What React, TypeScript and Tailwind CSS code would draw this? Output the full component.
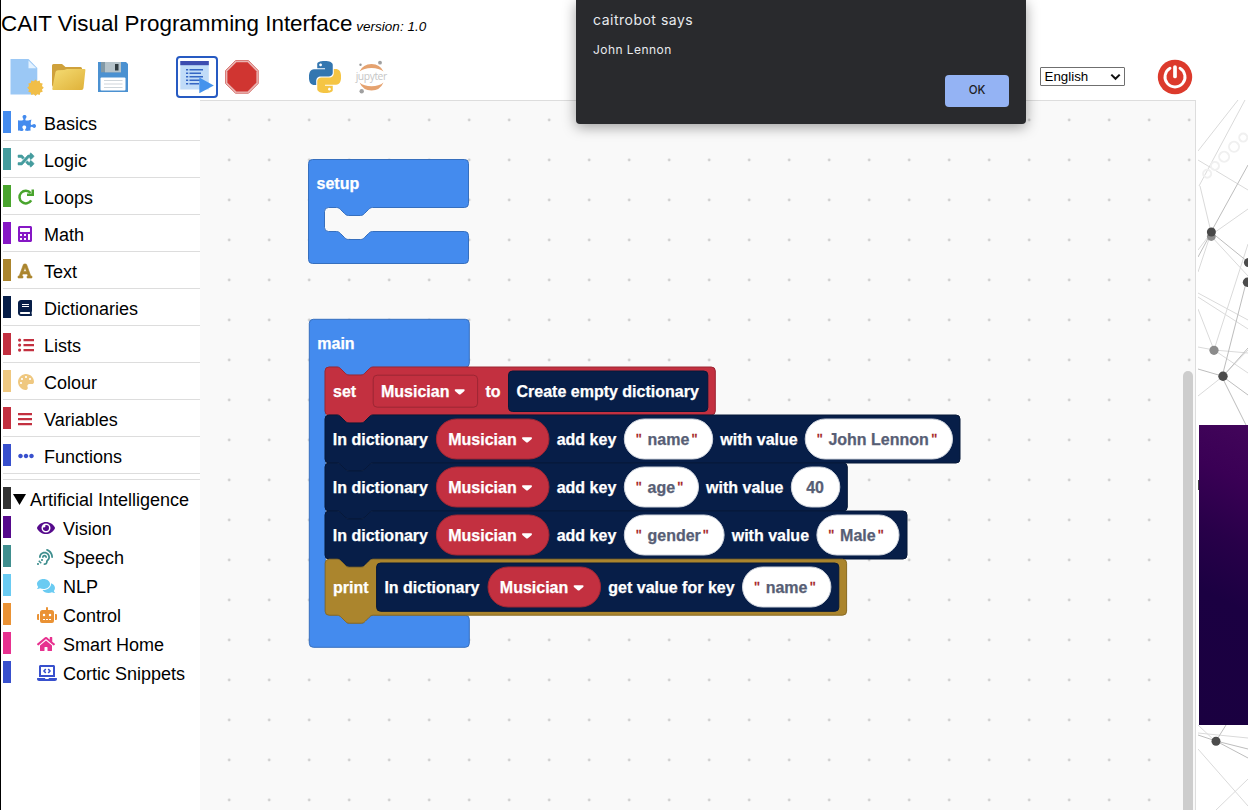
import React from "react";
import {
  FaPuzzlePiece, FaCalculator, FaFont, FaBook, FaPalette, FaRandom,
  FaEllipsisH, FaEye, FaAssistiveListeningSystems, FaComments, FaRobot, FaHome, FaLaptopCode,
} from "react-icons/fa";

type IconProps = { className?: string };
type Category = { name: string; bar: string; tint: string; Icon: React.ComponentType<IconProps> };

function RedoIcon({ className }: IconProps) {
  return (
    <svg viewBox="0 0 16 16" className={className}>
      <path d="M13.2 11.300A6.300 6.300 0 1 1 12.600 4" fill="none" stroke="currentColor" strokeWidth="2.500" />
      <path d="M9 6.900V4.600H13.500V0.400H16V6.900Z" fill="currentColor" />
    </svg>
  );
}

function ListIcon({ className }: IconProps) {
  return (
    <svg viewBox="0 0 16 16" className={className} fill="currentColor">
      <path d="M5.500 2H16V4.200H5.500ZM5.500 7H16V9.200H5.500ZM5.500 12H16V14.200H5.500Z" />
      <circle cx="1.600" cy="3.100" r="1.600" />
      <circle cx="1.600" cy="8.100" r="1.600" />
      <circle cx="1.600" cy="13.100" r="1.600" />
    </svg>
  );
}

function BarsIcon({ className }: IconProps) {
  return (
    <svg viewBox="0 0 14 16" className={className} fill="currentColor">
      <path d="M0 2H14V4.200H0ZM0 7H14V9.200H0ZM0 12H14V14.200H0Z" />
    </svg>
  );
}

const CATEGORIES: Category[] = [
  { name: "Basics", bar: "bg-[#448bee]", tint: "w-[18px] text-[#448bee]", Icon: FaPuzzlePiece },
  { name: "Logic", bar: "bg-[#459c9e]", tint: "w-4 text-[#459c9e] [stroke:currentColor] [stroke-width:18]", Icon: FaRandom },
  { name: "Loops", bar: "bg-[#49a42d]", tint: "w-4 text-[#49a42d]", Icon: RedoIcon },
  { name: "Math", bar: "bg-[#8617c5]", tint: "w-3.5 text-[#8617c5]", Icon: FaCalculator },
  { name: "Text", bar: "bg-[#ab852d]", tint: "w-3.5 text-[#ab852d] [stroke:currentColor] [stroke-width:20]", Icon: FaFont },
  { name: "Dictionaries", bar: "bg-[#071e48]", tint: "w-3.5 text-[#071e48]", Icon: FaBook },
  { name: "Lists", bar: "bg-[#c33040]", tint: "w-4 text-[#c33040]", Icon: ListIcon },
  { name: "Colour", bar: "bg-[#efc880]", tint: "w-4 text-[#efc880]", Icon: FaPalette },
  { name: "Variables", bar: "bg-[#c33040]", tint: "w-3.5 text-[#c33040]", Icon: BarsIcon },
  { name: "Functions", bar: "bg-[#3850cd]", tint: "w-4 text-[#3850cd]", Icon: FaEllipsisH },
];

const AI_CATEGORIES: Category[] = [
  { name: "Vision", bar: "bg-[#560a8c]", tint: "w-[18px] text-[#560a8c]", Icon: FaEye },
  { name: "Speech", bar: "bg-[#408f8f]", tint: "w-4 text-[#408f8f]", Icon: FaAssistiveListeningSystems },
  { name: "NLP", bar: "bg-[#6acbf2]", tint: "w-[18px] text-[#6acbf2]", Icon: FaComments },
  { name: "Control", bar: "bg-[#ea9234]", tint: "w-5 text-[#ea9234]", Icon: FaRobot },
  { name: "Smart Home", bar: "bg-[#e7318f]", tint: "w-[18px] text-[#e7318f]", Icon: FaHome },
  { name: "Cortic Snippets", bar: "bg-[#3850cd]", tint: "w-5 text-[#3850cd]", Icon: FaLaptopCode },
];

function Sidebar() {
  return (
    <nav className="flex w-[200px] shrink-0 flex-col bg-white pt-1 pl-[3px] text-[18px] text-black">
      {CATEGORIES.map(({ name, bar, tint, Icon }) => (
        <div key={name} className="flex h-[37px] items-start border-b border-[#dddddd] pt-[7px]">
          <div className={`h-[22px] w-2 ${bar}`} />
          <div className="flex h-[24px] w-[33px] items-center pl-[7px]">
            <Icon className={`h-4 shrink-0 overflow-visible ${tint}`} />
          </div>
          <span className="leading-[26px]">{name}</span>
        </div>
      ))}
      <div className="mt-[5px] border-t border-[#dddddd]" />
      <div className="mt-[7px] flex h-[29px] items-start">
        <div className="h-[22px] w-2 bg-[#333333]" />
        <svg width="13" height="11" viewBox="0 0 13 11" className="mt-[7px] ml-[1.5px]">
          <path d="M0 0H13L6.5 11Z" fill="#000" />
        </svg>
        <span className="ml-[4.5px] leading-[26px] whitespace-nowrap">Artificial Intelligence</span>
      </div>
      {AI_CATEGORIES.map(({ name, bar, tint, Icon }) => (
        <div key={name} className="flex h-[29px] items-start">
          <div className={`h-[22px] w-2 ${bar}`} />
          <div className="flex h-[24px] w-[52px] items-center pl-[26px]">
            <Icon className={`h-4 shrink-0 overflow-visible ${tint}`} />
          </div>
          <span className="leading-[26px] whitespace-nowrap">{name}</span>
        </div>
      ))}
    </nav>
  );
}

const NOTCH_R = "c2,0 3,1 4,2 l4,4 c1,1 2,2 4,2 h12 c2,0 3,-1 4,-2 l4,-4 c1,-1 2,-2 4,-2";
const NOTCH_L = "c-2,0 -3,1 -4,2 l-4,4 c-1,1 -2,2 -4,2 h-12 c-2,0 -3,-1 -4,-2 l-4,-4 c-1,-1 -2,-2 -4,-2";

function hat(x: number, y: number, cavity: number) {
  return `M${x + 4},${y} h152 a4,4 0 0 1 4,4 v40 a4,4 0 0 1 -4,4 H${x + 64} ${NOTCH_L} h-8 a4,4 0 0 0 -4,4 v${cavity - 8} a4,4 0 0 0 4,4 h8 ${NOTCH_R} H${x + 156} a4,4 0 0 1 4,4 v24 a4,4 0 0 1 -4,4 H${x + 4} a4,4 0 0 1 -4,-4 V${y + 4} a4,4 0 0 1 4,-4 z`;
}

function statement(x: number, y: number, w: number, h: number) {
  return `M${x},${y + 4} a4,4 0 0 1 4,-4 h8 ${NOTCH_R} H${x + w - 4} a4,4 0 0 1 4,4 v${h - 8} a4,4 0 0 1 -4,4 H${x + 48} ${NOTCH_L} h-8 a4,4 0 0 1 -4,-4 z`;
}

function Label({ x, y, children, fill = "#ffffff" }: { x: number; y: number; children: string; fill?: string }) {
  return <text x={x} y={y} fill={fill} stroke={fill} strokeWidth="0.25" fontSize="16" fontWeight="700">{children}</text>;
}

function Quote({ x, y }: { x: number; y: number }) {
  return <text x={x} y={y} fill="#a3201c" stroke="#a3201c" strokeWidth="0.35" fontSize="15.5">"</text>;
}

function Arrow({ x, y }: { x: number; y: number }) {
  return <path d={`M${x + 1.2},${y} h8.2 q1.6,0.3 0.6,1.7 l-3.5,3.2 q-1.2,1 -2.4,0 l-3.5,-3.2 q-1,-1.400 0.6,-1.7z`} fill="#fff" />;
}

function VariablePill({ x, y }: { x: number; y: number }) {
  return (
    <g>
      <rect x={x} y={y - 20} width="112.6" height="40" rx="20" fill="#c33040" stroke="#9c2633" />
      <Label x={x + 11.8} y={y + 5.8}>Musician</Label>
      <Arrow x={x + 85.300} y={y - 1.8} />
    </g>
  );
}

function ValuePill({ x, y, w, text }: { x: number; y: number; w: number; text: string }) {
  return (
    <g>
      <rect x={x} y={y - 20} width={w} height="40" rx="20" fill="#fff" stroke="#ced3dc" />
      <Quote x={x + 11.7} y={y + 5.4} />
      <Label x={x + 23.2} y={y + 5.8} fill="#575e75">{text}</Label>
      <Quote x={x + w - 21} y={y + 5.4} />
    </g>
  );
}

const ENTRIES = [
  { y: 415, w: 635, key: "name", keyW: 88.4, withX: 720.3, value: "John Lennon", valueX: 805.2, valueW: 147.3 },
  { y: 463, w: 522.3, key: "age", keyW: 74.2, withX: 706.1, value: "40", valueX: 791.3, valueW: 48.5 },
  { y: 511, w: 582, key: "gender", keyW: 99.8, withX: 731.7, value: "Male", valueX: 816.9, valueW: 82.1 },
];

function Workspace() {
  return (
    <main className="relative h-full w-[996px] shrink-0 border-t border-r border-[#dddddd] bg-[#f9f9f9]">
      <svg width="995" height="709" viewBox="200 101 995 709" className="block" fontFamily="'Liberation Sans', Arial, sans-serif">
        <defs>
          <pattern id="dots" x="209.2" y="100" width="40" height="40" patternUnits="userSpaceOnUse">
            <circle cx="20" cy="20" r="1.4" fill="#cfcfcf" />
          </pattern>
        </defs>
        <rect x="200" y="101" width="995" height="709" fill="url(#dots)" />

        <path d={hat(308.5, 159.5, 24)} fill="#448bee" stroke="#366fbe" />
        <Label x={316.5} y={189}>setup</Label>

        <path d={hat(309.3, 319.3, 248)} fill="#448bee" stroke="#366fbe" />
        <Label x={317.3} y={349}>main</Label>

        <path d={statement(325, 367, 390.3, 48)} fill="#c33040" stroke="#9c2633" />
        <Label x={333} y={396.8}>set</Label>
        <rect x="373.2" y="375.2" width="104.4" height="32" rx="4" fill="#c33040" stroke="#9c2633" />
        <Label x={381} y={396.8}>Musician</Label>
        <Arrow x={454.4} y={389.2} />
        <Label x={485.5} y={396.8}>to</Label>
        <rect x="508.5" y="371" width="199.3" height="40.5" rx="4" fill="#071e48" stroke="#061839" />
        <Label x={516.5} y={396.8}>Create empty dictionary</Label>

        {ENTRIES.map((e) => (
          <g key={e.key}>
            <path d={statement(325, e.y, e.w, 48)} fill="#071e48" stroke="#061839" />
            <Label x={332.8} y={e.y + 29.8}>In dictionary</Label>
            <VariablePill x={436.4} y={e.y + 24} />
            <Label x={556.7} y={e.y + 29.8}>add key</Label>
            <ValuePill x={624.3} y={e.y + 24} w={e.keyW} text={e.key} />
            <Label x={e.withX} y={e.y + 29.8}>with value</Label>
            {e.value === "40" ? (
              <g>
                <rect x={e.valueX} y={e.y + 4} width={e.valueW} height="40" rx="20" fill="#fff" stroke="#ced3dc" />
                <Label x={806.2} y={e.y + 29.8} fill="#575e75">40</Label>
              </g>
            ) : (
              <ValuePill x={e.valueX} y={e.y + 24} w={e.valueW} text={e.value} />
            )}
          </g>
        ))}

        <path d={statement(325.2, 559.2, 521.4, 56)} fill="#ab852d" stroke="#886a24" />
        <Label x={333} y={592.8}>print</Label>
        <rect x="376.6" y="563" width="462.2" height="48.3" rx="4" fill="#071e48" stroke="#061839" />
        <Label x={384.4} y={592.8}>In dictionary</Label>
        <VariablePill x={488} y={587} />
        <Label x={608.3} y={592.8}>get value for key</Label>
        <ValuePill x={742.5} y={587} w={88.4} text="name" />
      </svg>
      <div className="absolute top-0 right-0 bottom-0 flex w-3 flex-col pt-[270px]">
        <div className="w-2.5 flex-1 rounded-t-full bg-[#cdcdcd]" />
      </div>
    </main>
  );
}

function NetworkPanel() {
  return (
    <aside className="relative h-full w-[50px] shrink-0 overflow-hidden bg-white">
      <svg width="50" height="710" viewBox="1198 100 50 710" className="block" fill="none">
        <g stroke="#dadada" strokeWidth="1">
          <path d="M1238 100L1198 151M1245 100L1199 186M1198 160L1248 190M1200 186L1211 232M1248 209L1211 235M1211 233L1198 250M1211 233L1198 272M1211 236L1248 276M1248 244L1214 350M1198 293L1248 320M1198 297L1248 329M1198 309L1214 350M1198 347L1214 350L1248 353M1214 350L1248 373M1222 377L1248 350M1222 377L1198 396" />
          <path d="M1198 725L1216 742M1198 733L1248 738M1198 749L1248 806M1216 810L1248 779" />
        </g>
        <g stroke="#bdbdbd" strokeWidth="1">
          <path d="M1248 165L1211 232L1248 262M1211 233L1198 257M1246 283L1222 377M1198 369L1222 376L1248 395M1222 377L1246 425M1225 374L1248 348" />
          <path d="M1198 735L1216 741L1248 749M1216 741L1226 725M1216 741L1248 758" />
        </g>
        <g transform="rotate(-45 1222 156)" stroke="#f0f0f0" strokeWidth="2">
          <circle cx="1199" cy="158" r="4" />
          <circle cx="1210" cy="158" r="4" />
          <circle cx="1223" cy="158" r="5" />
          <circle cx="1237" cy="158" r="5" />
          <circle cx="1250" cy="158" r="4" />
        </g>
        <circle cx="1211.3" cy="236.5" r="4.4" fill="#8b8b8b" />
        <circle cx="1211.4" cy="232" r="4.5" fill="#484848" />
        <circle cx="1248.5" cy="262.5" r="4.6" fill="#4c4c4c" />
        <circle cx="1247.5" cy="282.3" r="4.7" fill="#4c4c4c" />
        <circle cx="1214" cy="350.3" r="4.6" fill="#8b8b8b" />
        <circle cx="1223" cy="376.3" r="4.7" fill="#4c4c4c" />
        <rect x="1198" y="480" width="2" height="10" fill="#444" />
        <circle cx="1216" cy="741.3" r="4.5" fill="#4c4c4c" />
      </svg>
      <div className="absolute top-[325px] right-0 h-[300px] w-[49px] bg-[linear-gradient(205deg,#42055a_0%,#3a0055_18%,#280049_38%,#1b0042_58%,#1a0040_100%)]" />
    </aside>
  );
}

const PY =
  "M14.25.18l.9.2.73.26.59.3.45.32.34.34.25.34.16.33.1.3.04.26.02.2-.01.13V8.5l-.05.63-.13.55-.21.46-.26.38-.3.31-.33.25-.35.19-.35.14-.33.1-.3.07-.26.04-.21.02H8.77l-.69.05-.59.14-.5.22-.41.27-.33.32-.27.35-.2.36-.15.37-.1.35-.07.32-.04.27-.02.21v3.06H3.17l-.21-.03-.28-.07-.32-.12-.35-.18-.36-.26-.36-.36-.35-.46-.32-.59-.28-.73-.21-.88-.14-1.05-.05-1.23.06-1.22.16-1.04.24-.87.32-.71.36-.57.4-.44.42-.33.42-.24.4-.16.36-.1.32-.05.24-.01h.16l.06.01h8.16v-.83H6.18l-.01-2.75-.02-.37.05-.34.11-.31.17-.28.25-.26.31-.23.38-.2.44-.18.51-.15.58-.12.64-.1.71-.06.77-.04.84-.02 1.27.05zm-6.3 1.98l-.23.33-.08.41.08.41.23.34.33.22.41.09.41-.09.33-.22.23-.34.08-.41-.08-.41-.23-.33-.33-.22-.41-.09-.41.09z";

function Toolbar() {
  const badge = Array.from({ length: 24 }, (_, i) => {
    const r = i % 2 ? 6.7 : 8.3;
    const a = (i * Math.PI) / 12;
    return `${(26.5 + r * Math.cos(a)).toFixed(2)},${(29.7 + r * Math.sin(a)).toFixed(2)}`;
  }).join(" ");
  return (
    <div className="flex h-[50px] items-start pl-[9px] pt-[5px]">
      <svg width="36" height="42" viewBox="0 0 36 42" className="mt-[3px]">
        <path d="M1.5 1H19.500L28.300 10V36.500H1.500Z" fill="#9bc8f5" />
        <path d="M19.500 2.500V10.300H27.300Z" fill="#e4f2ff" />
        <polygon points={badge} fill="#f1be48" />
      </svg>
      <svg width="36" height="30" viewBox="0 0 36 30" className="mt-[7px] ml-[6px]">
        <defs>
          <linearGradient id="folder" x1="0" y1="0" x2="1" y2="1">
            <stop offset="0" stopColor="#f5dc73" />
            <stop offset="1" stopColor="#dfb139" />
          </linearGradient>
        </defs>
        <path d="M1 3.500q0-1.500 1.500-1.500H11l3.500 3H29.500q1.500 0 1.500 1.500V25H3q-2 0-2-2Z" fill="#cfa13b" />
        <path d="M7 8.300L13 8L16 7H33.500q1 0 .9 1L32.500 26q-.2 2-2 2H2.500Q1 28 1.300 26.500L4.500 10q.4-1.700 2.500-1.700Z" fill="url(#folder)" />
      </svg>
      <svg width="30" height="30" viewBox="0 0 30 30" className="mt-[7px] ml-[11px]">
        <path d="M0 0H28L30 2V30H0Z" fill="#4b91d1" />
        <rect x="3" width="20" height="10.300" fill="#8299a6" />
        <rect x="7" width="16" height="10.300" fill="#b5c3ca" />
        <rect x="17" y="2" width="3.500" height="6.500" fill="#2f3b40" />
        <rect x="2.500" y="15.500" width="25" height="13" rx="1" fill="#fff" />
        <path d="M6 18.500H24.500M6 22H24.500M6 25.500H24.500" stroke="#cfd6db" strokeWidth="1.200" />
      </svg>
      <div className="mt-[1px] ml-[48px] h-[42px] w-[42px] rounded-[4px] border-2 border-[#265ac2]">
        <svg width="38" height="38" viewBox="178 58 38 38" className="block">
          <rect x="180.300" y="61" width="28.500" height="28.500" fill="#c1dcf8" />
          <rect x="180.300" y="61" width="28.500" height="4.200" fill="#3d4db0" />
          <path d="M186 69.800h2.200M189.500 69.800H203M186 73.300h2.200M189.500 73.300H201M186 76.800h2.200M189.500 76.800H203M186 80.300h2.200M189.500 80.300H200M186 83.800h2.200M189.500 83.800H199" stroke="#3566c4" strokeWidth="1.400" />
          <path d="M199.300 77.500V93.300L213.800 85.400Z" fill="#4593ed" />
        </svg>
      </div>
      <svg width="36" height="36" viewBox="0 0 36 36" className="mt-[4px] ml-[6px]">
        <path d="M11.500 1.500H24.500L34.300 11.500V24.500L24.500 34.300H11.500L1.500 24.500V11.500Z" fill="#e9b3b1" stroke="#d97d79" strokeWidth="1" />
        <path d="M12.400 3.300H23.600L32.400 12.200V23.700L23.600 32.400H12.400L3.400 23.700V12.200Z" fill="#d03531" />
      </svg>
      <svg width="32" height="32" viewBox="0 0 24 24" className="mt-[6px] ml-[49px]">
        <path d={PY} fill="#3376b0" />
        <path d={PY} fill="#f5c544" transform="rotate(180 12 12)" />
      </svg>
      <svg width="36" height="38" viewBox="354 58 36 38" className="mt-[3px] ml-[12.500px]">
        <path d="M359.500 71.500Q363 64 371.500 64T383.500 71.500Q379 68 371.500 68T359.500 71.500Z" fill="#e5a26f" />
        <path d="M359.500 82.500Q363 90.500 371.500 90.500T383.500 82.500Q379 86.300 371.500 86.300T359.500 82.500Z" fill="#e5a26f" />
        <text x="355.700" y="80" textLength="31.500" fontSize="10.300" fill="#c6c6c6" fontFamily="'Open Sans', sans-serif">jupyter</text>
        <circle cx="380" cy="62.700" r="1.900" fill="#a0a0a0" />
        <circle cx="360.500" cy="64.700" r="1.200" fill="#999" />
        <circle cx="361.700" cy="91.300" r="2.200" fill="#a0a0a0" />
      </svg>
      <div className="mt-[12px] ml-[650px] flex h-[19px] w-[85px] items-center justify-between rounded-[1px] border border-[#6f6f6f] bg-white pr-[3px] pl-1 text-[13.33px] text-black">
        <span className="leading-none">English</span>
        <svg width="11" height="8" viewBox="0 0 11 8"><path d="M1.300 1.600L5.500 5.800L9.700 1.600" fill="none" stroke="#111" strokeWidth="2" /></svg>
      </div>
      <svg width="36" height="36" viewBox="0 0 36 36" className="mt-[4px] ml-[32px]">
        <circle cx="18" cy="18" r="17.200" fill="#dc3a2c" />
        <path d="M13 9.300A10 10 0 1 0 23 9.300" fill="none" stroke="#fff" strokeWidth="2.900" strokeLinecap="round" />
        <path d="M18 8V17.500" stroke="#fff" strokeWidth="3.700" strokeLinecap="round" />
      </svg>
    </div>
  );
}

function AlertDialog() {
  return (
    <div className="absolute top-0 left-[576px] flex h-[124px] w-[450px] flex-col rounded-b-[4px] bg-[#292a2d] px-[17px] font-['Inter',sans-serif] text-[#e8eaed] shadow-[0_3px_14px_rgba(0,0,0,0.38)]">
      <h2 className="mt-[10px] text-[14px] leading-5 font-normal tracking-[0.5px]">caitrobot says</h2>
      <p className="mt-[11px] text-[12px] leading-[18px] tracking-[0.45px]">John Lennon</p>
      <button className="mt-4 h-8 w-16 self-end rounded-[4px] bg-[#94b3f4] text-[11.5px] font-medium text-[#202124]">OK</button>
    </div>
  );
}

export default function App() {
  return (
    <div className="relative flex h-[810px] w-[1248px] flex-col overflow-hidden bg-white font-['Liberation_Sans',Arial,sans-serif]">
      <header className="h-[50px] pt-[8px] pl-[1px] leading-8 whitespace-nowrap text-black">
        <span className="text-[22.4px]">CAIT Visual Programming Interface</span>
        <em className="ml-[4px] text-[13.5px]">version: 1.0</em>
      </header>
      <Toolbar />
      <div className="flex min-h-0 flex-1">
        <Sidebar />
        <Workspace />
        <div className="w-[2px] shrink-0" />
        <NetworkPanel />
      </div>
      <div className="absolute inset-y-0 left-0 w-px bg-black" />
      <AlertDialog />
    </div>
  );
}
